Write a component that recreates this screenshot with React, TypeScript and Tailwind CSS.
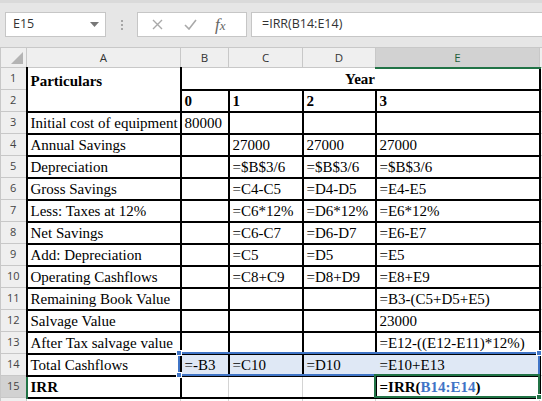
import React from "react";

const serif = "font-['Liberation_Serif','Times_New_Roman',serif]";
const ui = "font-['Open_Sans','Liberation_Sans',sans-serif]";

// rows 3..14: A, B, C, D, E
const rows: string[][] = [
  ["Initial cost of equipment", "80000", "", "", ""],
  ["Annual Savings", "", "27000", "27000", "27000"],
  ["Depreciation", "", "=$B$3/6", "=$B$3/6", "=$B$3/6"],
  ["Gross Savings", "", "=C4-C5", "=D4-D5", "=E4-E5"],
  ["Less: Taxes at 12%", "", "=C6*12%", "=D6*12%", "=E6*12%"],
  ["Net Savings", "", "=C6-C7", "=D6-D7", "=E6-E7"],
  ["Add: Depreciation", "", "=C5", "=D5", "=E5"],
  ["Operating Cashflows", "", "=C8+C9", "=D8+D9", "=E8+E9"],
  ["Remaining Book Value", "", "", "", "=B3-(C5+D5+E5)"],
  ["Salvage Value", "", "", "", "23000"],
  ["After Tax salvage value", "", "", "", "=E12-((E12-E11)*12%)"],
  ["Total Cashflows", "=-B3", "=C10", "=D10", "=E10+E13"],
];

const cols = ["A", "B", "C", "D", "E"];

function RowHead({ n, active }: { n: number | string; active?: boolean }) {
  return (
    <td
      className={`${ui} text-[11px] text-center align-middle border border-[#c8c8c8] p-0 ${
        active ? "bg-[#d2d2d2] text-[#444] border-r-2 border-r-[#217346]" : "bg-[#efefef] text-[#444]"
      }`}
    >
      {n}
    </td>
  );
}

function Handle({ x, y, color }: { x: number; y: number; color: string }) {
  return (
    <div
      className={`absolute w-[6px] h-[6px] border border-white ${color}`}
      style={{ left: x - 3, top: y - 3 }}
    />
  );
}

export default function App() {
  return (
    <div className="w-[542px] h-[401px] overflow-hidden bg-white relative">
      {/* Formula bar */}
      <div className="h-[47px] bg-[#e6e6e6] border-t-[3px] border-t-[#dadada] flex items-start pt-[9px]">
        <div className="ml-[5px] w-[101px] h-[25px] bg-white border border-[#c6c6c6] flex items-center justify-between pl-[7px] pr-[6px]">
          <span className={`${ui} text-[12.5px] text-[#333]`}>E15</span>
          <svg width="9" height="5" viewBox="0 0 9 5">
            <path d="M0 0h9L4.5 5z" fill="#777" />
          </svg>
        </div>
        <div className="w-[31px] h-[25px] flex flex-col items-center justify-center gap-[2px]">
          <span className="w-[2px] h-[2px] bg-[#a6a6a6]" />
          <span className="w-[2px] h-[2px] bg-[#a6a6a6]" />
          <span className="w-[2px] h-[2px] bg-[#a6a6a6]" />
        </div>
        <div className="w-[110px] h-[25px] bg-white border border-[#c6c6c6] flex items-center pl-[13px]">
          <svg width="11" height="11" viewBox="0 0 11 11" className="ml-[1px]">
            <path d="M1 1l9 9M10 1l-9 9" stroke="#a9a9a9" strokeWidth="1.4" />
          </svg>
          <svg width="13" height="11" viewBox="0 0 13 11" className="ml-[21px]">
            <path d="M1 6l4 4 7-9" stroke="#a9a9a9" strokeWidth="1.6" fill="none" />
          </svg>
          <span className={`${serif} italic text-[17px] text-[#666] ml-[18px] leading-none`}>
            f<span className="text-[13px]">x</span>
          </span>
        </div>
        <div className="ml-[4px] flex-1 h-[25px] bg-white border border-[#c6c6c6] border-r-0 flex items-center pl-[10px]">
          <span className={`${ui} text-[12.5px] text-[#333]`}>=IRR(B14:E14)</span>
        </div>
      </div>

      {/* Grid */}
      <table className={`${serif} text-[15px] text-black border-collapse table-fixed w-[542px]`}>
        <colgroup>
          <col className="w-[26px]" />
          <col className="w-[154px]" />
          <col className="w-[48px]" />
          <col className="w-[74px]" />
          <col className="w-[73px]" />
          <col className="w-[164px]" />
          <col className="w-[3px]" />
        </colgroup>
        <thead>
          <tr className="h-[20px]">
            <th className="bg-[#efefef] border border-[#c8c8c8] p-0 relative">
              <svg width="12" height="12" viewBox="0 0 12 12" className="absolute right-[3px] bottom-[3px]">
                <path d="M12 0v12H0z" fill="#b4b4b4" />
              </svg>
            </th>
            {cols.map((c) => (
              <th
                key={c}
                className={`${ui} text-[11.5px] font-normal p-0 border border-[#c8c8c8] ${
                  c === "E"
                    ? "bg-[#d2d2d2] text-[#1f5f3b] border-b-2 border-b-[#217346]"
                    : "bg-[#efefef] text-[#333]"
                }`}
              >
                {c}
              </th>
            ))}
            <th className="bg-[#efefef] border border-[#c8c8c8] p-0" />
          </tr>
        </thead>
        <tbody>
          <tr className="h-[22px]">
            <RowHead n={1} />
            <td
              rowSpan={2}
              className="font-bold align-top px-[3px] pt-[2px] border-l-2 border-r-2 border-b-2 border-black"
            >
              Particulars
            </td>
            <td colSpan={4} className="font-bold text-center align-bottom border-2 border-t-0 border-black p-0 leading-[19px]">
              Year
            </td>
            <td className="border border-[#d4d4d4]" />
          </tr>
          <tr className="h-[22px]">
            <RowHead n={2} />
            {["0", "1", "2", "3"].map((v) => (
              <td key={v} className="font-bold align-bottom border-2 border-black px-[3px] p-0 leading-[19px]">
                {v}
              </td>
            ))}
            <td className="border border-[#d4d4d4]" />
          </tr>
          {rows.map((r, i) => {
            const n = i + 3;
            const sel = n === 14;
            return (
              <tr key={n} className="h-[22px]">
                <RowHead n={n} />
                {r.map((v, j) => (
                  <td
                    key={j}
                    className={`align-bottom whitespace-nowrap overflow-visible px-[3px] py-0 leading-[19px] border-2 border-black ${
                      sel && j > 0 ? "bg-[#dfe8f5]" : ""
                    } ${sel && j === 3 ? "border-r-[#dfe8f5]" : ""}`}
                  >
                    {v}
                  </td>
                ))}
                <td className="border border-[#d4d4d4]" />
              </tr>
            );
          })}
          <tr className="h-[22px]">
            <RowHead n={15} active />
            <td className="font-bold align-bottom px-[3px] py-0 leading-[19px] border-2 border-black border-l-[#217346]">
              IRR
            </td>
            <td className="border-y-2 border-black border-x border-x-[#d4d4d4]" />
            <td className="border-y-2 border-black border-x border-x-[#d4d4d4]" />
            <td className="border-y-2 border-black border-l border-l-[#d4d4d4] border-r-2" />
            <td className="font-bold align-bottom px-[3px] py-0 leading-[19px] border-2 border-black whitespace-nowrap">
              =IRR(<span className="text-[#3f74c6]">B14:E14</span>)
            </td>
            <td className="border border-[#d4d4d4]" />
          </tr>
          <tr className="h-[4px]">
            <RowHead n="" />
            <td className="border border-[#d4d4d4]" />
            <td className="border border-[#d4d4d4]" />
            <td className="border border-[#d4d4d4]" />
            <td className="border border-[#d4d4d4]" />
            <td className="border border-[#d4d4d4]" />
            <td className="border border-[#d4d4d4]" />
          </tr>
        </tbody>
      </table>

      {/* Reference range highlight B14:E14 */}
      <div className="absolute left-[178px] top-[352px] w-[362px] h-[24px] border-2 border-[#3f74c6] pointer-events-none" />
      <Handle x={179} y={353} color="bg-[#3f74c6]" />
      <Handle x={179} y={375} color="bg-[#3f74c6]" />
      <Handle x={539} y={353} color="bg-[#3f74c6]" />
      {/* Active cell E15 */}
      <div className="absolute left-[374px] top-[374px] w-[166px] h-[24px] border-2 border-[#217346] pointer-events-none" />
      <Handle x={539} y={397} color="bg-[#217346]" />
    </div>
  );
}
